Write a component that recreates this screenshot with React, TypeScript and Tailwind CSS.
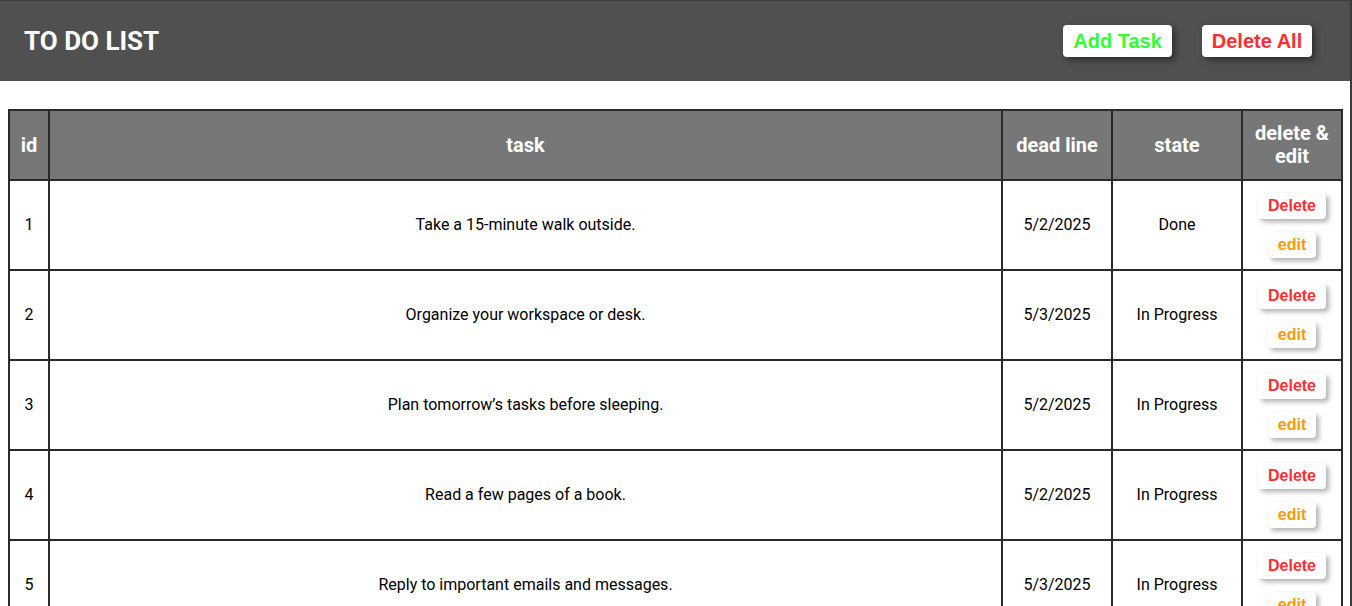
const tasks = [
  { id: 1, task: "Take a 15-minute walk outside.", deadline: "5/2/2025", state: "Done" },
  { id: 2, task: "Organize your workspace or desk.", deadline: "5/3/2025", state: "In Progress" },
  { id: 3, task: "Plan tomorrow\u2019s tasks before sleeping.", deadline: "5/2/2025", state: "In Progress" },
  { id: 4, task: "Read a few pages of a book.", deadline: "5/2/2025", state: "In Progress" },
  { id: 5, task: "Reply to important emails and messages.", deadline: "5/3/2025", state: "In Progress" },
];

const arial = { fontFamily: '"Liberation Sans", Arial, sans-serif' };

export default function App() {
  return (
    <div
      className="min-h-[606px] w-[1352px] border-r-2 border-[#3a3a3a] bg-white"
      style={{ fontFamily: "Roboto, sans-serif" }}
    >
      <header className="flex h-[81px] items-center justify-between border-t border-[#3c3c3c] bg-[#505050] pl-6 pr-[38px]">
        <h1 className="text-[26px] font-bold text-white">TO DO LIST</h1>
        <div className="flex gap-[30px]">
          <button
            style={arial}
            className="h-8 w-[109px] rounded-[4px] bg-white text-[20px] font-bold text-[#33ff33] shadow-[3px_3px_6px_rgba(0,0,0,0.45)]"
          >
            Add Task
          </button>
          <button
            style={arial}
            className="h-8 w-[110px] rounded-[4px] bg-white text-[20px] font-bold text-[#ff2e2e] shadow-[3px_3px_6px_rgba(0,0,0,0.45)]"
          >
            Delete All
          </button>
        </div>
      </header>

      <div className="pl-[8px] pt-[28px]">
        <table className="w-[1335px] table-fixed border-collapse border-2 border-[#2a2a2a] text-center text-[16px] text-black">
          <colgroup>
            <col className="w-[40px]" />
            <col />
            <col className="w-[110px]" />
            <col className="w-[130px]" />
            <col className="w-[100px]" />
          </colgroup>
          <thead>
            <tr className="h-[70px] bg-[#777777] text-[20px] font-bold leading-[23px] text-white">
              <th className="border-2 border-[#2a2a2a]">id</th>
              <th className="border-2 border-[#2a2a2a]">task</th>
              <th className="border-2 border-[#2a2a2a]">dead line</th>
              <th className="border-2 border-[#2a2a2a]">state</th>
              <th className="border-2 border-[#2a2a2a] px-2">delete &amp; edit</th>
            </tr>
          </thead>
          <tbody>
            {tasks.map((t) => (
              <tr key={t.id} className="h-[90px]">
                <td className="border-2 border-[#2a2a2a]">{t.id}</td>
                <td className="border-2 border-[#2a2a2a]">{t.task}</td>
                <td className="border-2 border-[#2a2a2a]">{t.deadline}</td>
                <td className="border-2 border-[#2a2a2a]">{t.state}</td>
                <td className="border-2 border-[#2a2a2a]">
                  <div className="flex flex-col items-center gap-[13px]">
                    <button
                      style={arial}
                      className="h-[26px] w-[68px] rounded-[4px] bg-white text-[16px] font-bold text-[#ff2e2e] shadow-[3px_3px_5px_rgba(0,0,0,0.3)]"
                    >
                      Delete
                    </button>
                    <button
                      style={arial}
                      className="h-[26px] w-[48px] rounded-[4px] bg-white text-[16px] font-bold text-[#ff9900] shadow-[3px_3px_5px_rgba(0,0,0,0.3)]"
                    >
                      edit
                    </button>
                  </div>
                </td>
              </tr>
            ))}
          </tbody>
        </table>
      </div>
    </div>
  );
}
